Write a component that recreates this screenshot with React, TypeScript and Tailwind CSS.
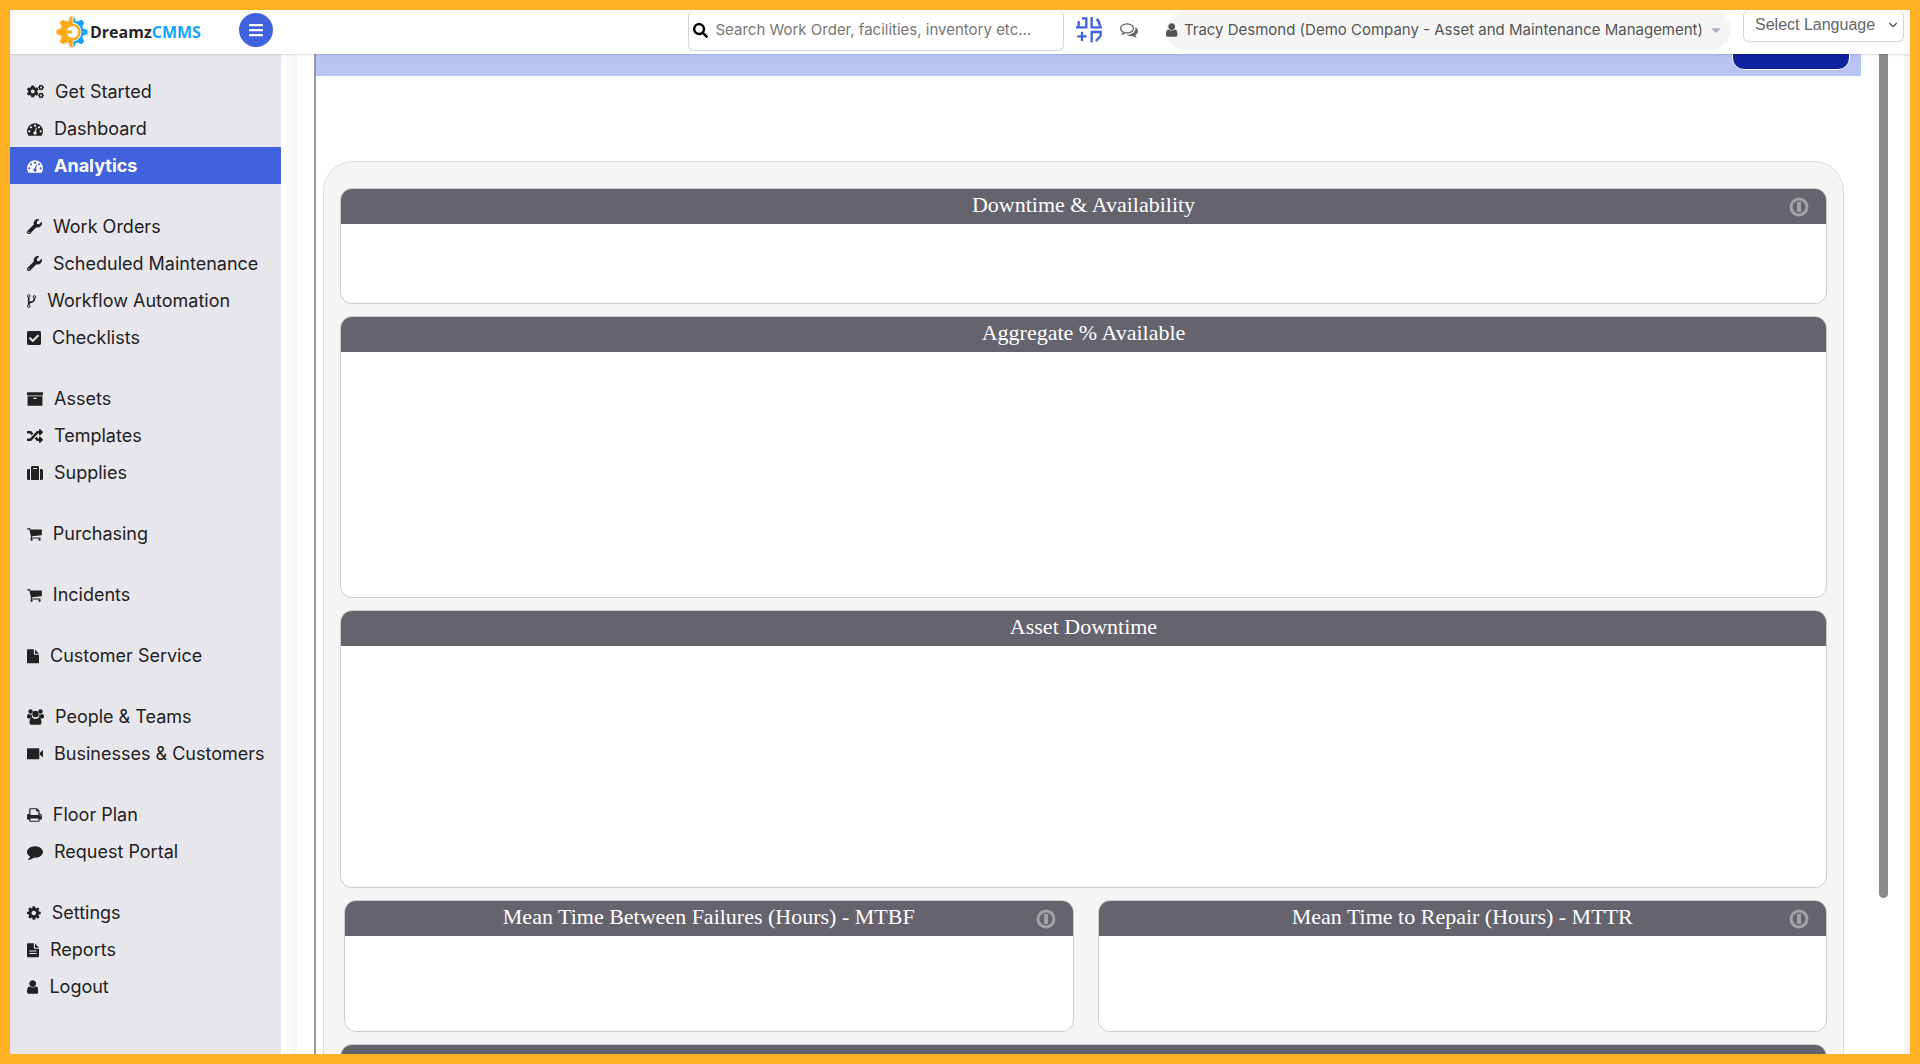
import type { ReactNode } from "react"
import {
  FaBars,
  FaCaretDown,
  FaCheckSquare,
  FaCogs,
  FaRandom,
  FaSearch,
  FaSuitcase,
  FaWrench,
} from "react-icons/fa"
import { FiChevronDown } from "react-icons/fi"

// Icons share a 1792 unit height, each one keeps its own width
function Glyph({ box, d }: { box: string; d: string }) {
  return (
    <svg viewBox={box} fill="currentColor" aria-hidden="true" className="h-4 w-auto shrink-0">
      <path d={d} />
    </svg>
  )
}

const GaugeIcon = () => (
  <Glyph
    box="0 0 1792 1792"
    d="M384 1152q0-53-37.5-90.5t-90.5-37.5-90.5 37.5-37.5 90.5 37.5 90.5 90.5 37.5 90.5-37.5 37.5-90.5zm192-448q0-53-37.5-90.5t-90.5-37.5-90.5 37.5-37.5 90.5 37.5 90.5 90.5 37.5 90.5-37.5 37.5-90.5zm428 481l101-382q6-26-7.5-48.5t-38.5-29.5-48 6.5-30 39.5l-101 382q-60 5-107 43.5t-63 98.5q-20 77 20 146t117 89 146-20 89-117q16-60-6-117t-72-91zm660-33q0-53-37.5-90.5t-90.5-37.5-90.5 37.5-37.5 90.5 37.5 90.5 90.5 37.5 90.5-37.5 37.5-90.5zm-640-640q0-53-37.5-90.5t-90.5-37.5-90.5 37.5-37.5 90.5 37.5 90.5 90.5 37.5 90.5-37.5 37.5-90.5zm448 192q0-53-37.5-90.5t-90.5-37.5-90.5 37.5-37.5 90.5 37.5 90.5 90.5 37.5 90.5-37.5 37.5-90.5zm320 448q0 261-141 483-19 29-54 29h-1402q-35 0-54-29-141-221-141-483 0-182 71-348t191-286 286-191 348-71 348 71 286 191 191 286 71 348z"
  />
)

const ForkIcon = () => (
  <Glyph
    box="384 0 1024 1792"
    d="M672 1472q0-40-28-68t-68-28-68 28-28 68 28 68 68 28 68-28 28-68zm0-1152q0-40-28-68t-68-28-68 28-28 68 28 68 68 28 68-28 28-68zm640 128q0-40-28-68t-68-28-68 28-28 68 28 68 68 28 68-28 28-68zm96 0q0 52-26 96.5t-70 69.5q-2 287-226 414-67 38-203 81-128 40-169.5 71t-41.5 100v26q44 25 70 69.5t26 96.5q0 80-56 136t-136 56-136-56-56-136q0-52 26-96.5t70-69.5v-820q-44-25-70-69.5t-26-96.5q0-80 56-136t136-56 136 56 56 136q0 52-26 96.5t-70 69.5v497q54-26 154-57 55-17 87.5-29.5t70.5-31 59-39.5 40.5-51 28-69.5 8.5-91.5q-44-25-70-69.5t-26-96.5q0-80 56-136t136-56 136 56 56 136z"
  />
)

const ArchiveIcon = () => (
  <Glyph
    box="0 0 1792 1792"
    d="M1088 832q0-26-19-45t-45-19h-256q-26 0-45 19t-19 45 19 45 45 19h256q26 0 45-19t19-45zm640-192v960q0 26-19 45t-45 19h-1536q-26 0-45-19t-19-45v-960q0-26 19-45t45-19h1536q26 0 45 19t19 45zm64-448v256q0 26-19 45t-45 19h-1664q-26 0-45-19t-19-45v-256q0-26 19-45t45-19h1664q26 0 45 19t19 45z"
  />
)

const CartIcon = () => (
  <Glyph
    box="64 0 1664 1792"
    d="M704 1536q0 52-38 90t-90 38-90-38-38-90 38-90 90-38 90 38 38 90zm896 0q0 52-38 90t-90 38-90-38-38-90 38-90 90-38 90 38 38 90zm128-1088v512q0 24-16.5 42.5t-40.5 21.5l-1044 122q13 60 13 70 0 16-24 64h920q26 0 45 19t19 45-19 45-45 19h-1024q-26 0-45-19t-19-45q0-11 8-31.5t16-36 21.5-40 15.5-29.5l-177-823h-204q-26 0-45-19t-19-45 19-45 45-19h256q16 0 28.5 6.5t19.5 15.5 13 24.5 8 26 5.5 29.5 4.5 26h1201q26 0 45 19t19 45z"
  />
)

const FileIcon = () => (
  <Glyph
    box="128 0 1344 1792"
    d="M1024 640v-480q18 10 30 22l386 420q12 14 18 38h-434zm-128 32q0 40 28 68t68 28h480v830q0 40-28 68t-68 28h-1152q-40 0-68-28t-28-68v-1374q0-40 28-68t68-28h672v544z"
  />
)

const ReportIcon = () => (
  <Glyph
    box="128 0 1344 1792"
    d="M1024 640v-480q18 10 30 22l386 420q12 14 18 38h-434zm-128 32q0 40 28 68t68 28h480v830q0 40-28 68t-68 28h-1152q-40 0-68-28t-28-68v-1374q0-40 28-68t68-28h672v544zM400 960v110h800v-110zm0 270v110h800v-110z"
  />
)

const PrintIcon = () => (
  <Glyph
    box="64 0 1664 1792"
    d="M448 1536h896v-256h-896v256zm0-640h896v-384h-160q-40 0-68-28t-28-68v-160h-640v640zm1152 64q0-26-19-45t-45-19-45 19-19 45 19 45 45 19 45-19 19-45zm128 0v416q0 13-9.5 22.5t-22.5 9.5h-224v160q0 40-28 68t-68 28h-960q-40 0-68-28t-28-68v-160h-224q-13 0-22.5-9.5t-9.5-22.5v-416q0-79 56.5-135.5t135.5-56.5h64v-544q0-40 28-68t68-28h672q40 0 88 20t76 48l152 152q28 28 48 76t20 88v256h64q79 0 135.5 56.5t56.5 135.5z"
  />
)

const CommentIcon = () => (
  <Glyph
    box="0 0 1792 1792"
    d="M1792 896q0 174-120 321.5t-326 233-450 85.5q-70 0-145-8-198 175-460 242-49 14-114 22-17 2-30.5-9t-17.5-29v-1q-3-4-.5-12t2-10 4.5-9.5l6-9 7-8.5 8-9q7-8 31-34.5t34.5-38 31-39.5 32.5-51 27-59 26-76q-157-89-247.5-220t-90.5-281q0-130 71-248.5t191-204.5 286-136.5 348-50.5q244 0 450 85.5t326 233 120 321.5z"
  />
)

const CogIcon = () => (
  <Glyph
    box="128 0 1536 1792"
    d="M1152 896q0-106-75-181t-181-75-181 75-75 181 75 181 181 75 181-75 75-181zm512-109v222q0 12-8 23t-20 13l-185 28q-19 54-39 91 35 50 107 138 10 12 10 25t-9 23q-27 37-99 108t-94 71q-12 0-26-9l-138-108q-44 23-91 38-16 136-29 186-7 28-36 28h-222q-14 0-24.5-8.5t-11.5-21.5l-28-184q-49-16-90-37l-141 107q-10 9-25 9-14 0-25-11-126-114-165-168-7-10-7-23 0-12 8-23 15-21 51-66.5t54-70.5q-27-50-41-99l-183-27q-13-2-21-12.5t-8-23.5v-222q0-12 8-23t19-13l186-28q14-46 39-92-40-57-107-138-10-12-10-24 0-10 9-23 26-36 98.5-107.5t94.5-71.5q13 0 26 10l138 107q44-23 91-38 16-136 29-186 7-28 36-28h222q14 0 24.5 8.5t11.5 21.5l28 184q49 16 90 37l142-107q9-9 24-9 13 0 25 10 129 119 165 170 7 8 7 22 0 12-8 23-15 21-51 66.5t-54 70.5q26 50 41 98l183 28q13 2 21 12.5t8 23.5z"
  />
)

const UserIcon = () => (
  <Glyph
    box="256 0 1280 1792"
    d="M1536 1399q0 109-62.5 187t-150.5 78h-854q-88 0-150.5-78t-62.5-187q0-85 8.5-160.5t31.5-152 58.5-131 94-89 134.5-34.5q131 128 313 128t313-128q76 0 134.5 34.5t94 89 58.5 131 31.5 152 8.5 160.5zm-256-887q0 159-112.5 271.5t-271.5 112.5-271.5-112.5-112.5-271.5 112.5-271.5 271.5-112.5 271.5 112.5 112.5 271.5z"
  />
)

const CameraIcon = () => (
  <Glyph box="0 0 1792 1792" d="M60 250h1260q60 0 60 60v1120q0 60-60 60h-1260q-60 0-60-60v-1120q0-60 60-60zM1792 450v840l-340-300v-240z" />
)

const TeamIcon = () => (
  <svg viewBox="0 0 17 16" fill="currentColor" aria-hidden="true" className="h-4 w-auto shrink-0">
    <circle cx="3.5" cy="2.5" r="2.2" />
    <circle cx="13.5" cy="2.5" r="2.2" />
    <circle cx="8.5" cy="5" r="3.2" />
    <path d="M0 7.6C0 5.8.6 4.9 1.6 4.9c1 .7 2 .7 3 .4C4.6 7 5 7.7 5.5 8.4 4.5 8.5 3.7 8.9 3.2 9.5H1.5C.6 9.5 0 8.8 0 7.6zM17 7.6c0-1.8-.6-2.7-1.6-2.7-1 .7-2 .7-3 .4 0 1.7-.4 2.4-.9 3.1 1 .1 1.8.5 2.3 1.1h1.7c.9 0 1.5-.7 1.5-1.9zM2.5 13.4c0-2.6.8-4.6 2.9-4.6 2 1.6 4.2 1.6 6.2 0 2.1 0 2.9 2 2.9 4.6 0 1.5-.9 2.4-2.2 2.4H4.7c-1.3 0-2.2-.9-2.2-2.4z" />
  </svg>
)

const ChatIcon = () => (
  <svg viewBox="0 128 1792 1664" fill="currentColor" aria-hidden="true" className="w-[18px]">
    <path d="M704 384q-153 0-286 52t-211.5 141-78.5 191q0 82 53 158t149 132l97 56-35 84q34-20 62-39l44-31 53 10q78 14 153 14 153 0 286-52t211.5-141 78.5-191-78.5-191-211.5-141-286-52zm0-128q191 0 353.5 68.5t256.5 186.5 94 257-94 257-256.5 186.5-353.5 68.5q-86 0-176-16-124 88-278 128-36 9-86 16h-3q-11 0-20.5-8t-11.5-21q-1-3-1-6.5t.5-6.5 2-6l2.5-5 3.5-5.5 4-5 4.5-5 4-4.5q5-6 23-25t26-29.5 22.5-29 25-38.5 20.5-44q-124-72-195-177t-71-224q0-139 94-257t256.5-186.5 353.5-68.5zm822 1169q10 24 20.5 44t25 38.5 22.5 29 26 29.5 23 25q1 1 4 4.5t4.5 5 4 5 3.5 5.5l2.5 5 2 6 .5 6.5-1 6.5q-3 14-13 22t-22 7q-50-7-86-16-154-40-278-128-90 16-176 16-271 0-472-132 58 4 88 4 161 0 309-45t264-129q125-92 192-212t67-254q0-77-23-152 129 71 204 178t75 230q0 120-71 224.5t-195 176.5z" />
  </svg>
)

const QuickAddIcon = () => (
  <svg viewBox="0 0 78 76" fill="none" stroke="#4063dd" strokeWidth="7" aria-hidden="true" className="w-[26px]">
    <path d="M0 31H31V4H18M8 31V12" />
    <path d="M78 31H47V0M62 6Q70 12 72 27" />
    <path d="M47 76V45H74V56L60 72" />
    <path d="M4 58H32M18 44V72" />
  </svg>
)

const InfoIcon = () => (
  <svg viewBox="0 0 20 20" fill="none" stroke="#a1a1a4" strokeWidth="3" aria-hidden="true" className="size-5">
    <circle cx="10" cy="10" r="8" />
    <path d="M10 5V15" strokeWidth="4" />
  </svg>
)

type NavItem = { label: string; icon: ReactNode; active?: boolean }

const navGroups: NavItem[][] = [
  [
    { label: "Get Started", icon: <FaCogs className="size-[17px]" /> },
    { label: "Dashboard", icon: <GaugeIcon /> },
    { label: "Analytics", icon: <GaugeIcon />, active: true },
  ],
  [
    { label: "Work Orders", icon: <FaWrench className="size-[15px]" /> },
    { label: "Scheduled Maintenance", icon: <FaWrench className="size-[15px]" /> },
    { label: "Workflow Automation", icon: <ForkIcon /> },
    { label: "Checklists", icon: <FaCheckSquare className="h-4 w-3.5" /> },
  ],
  [
    { label: "Assets", icon: <ArchiveIcon /> },
    { label: "Templates", icon: <FaRandom className="size-4" /> },
    { label: "Supplies", icon: <FaSuitcase className="size-4" /> },
  ],
  [{ label: "Purchasing", icon: <CartIcon /> }],
  [{ label: "Incidents", icon: <CartIcon /> }],
  [{ label: "Customer Service", icon: <FileIcon /> }],
  [
    { label: "People & Teams", icon: <TeamIcon /> },
    { label: "Businesses & Customers", icon: <CameraIcon /> },
  ],
  [
    { label: "Floor Plan", icon: <PrintIcon /> },
    { label: "Request Portal", icon: <CommentIcon /> },
  ],
  [
    { label: "Settings", icon: <CogIcon /> },
    { label: "Reports", icon: <ReportIcon /> },
    { label: "Logout", icon: <UserIcon /> },
  ],
]

const teeth = [0, 45, 90, 135, 180, 225, 270, 315]

function Logo() {
  return (
    <a href="#" className="flex items-center gap-[2px]">
      <svg viewBox="0 0 32 32" aria-hidden="true" className="size-8">
        <defs>
          <clipPath id="gear-left">
            <path d="M0 0H16.5V32H0z" />
          </clipPath>
          <clipPath id="gear-right">
            <path d="M17.5 0H32V32H17.5z" />
          </clipPath>
        </defs>
        <g clipPath="url(#gear-left)" fill="#fbab18">
          {teeth.map((angle) => (
            <path key={angle} d="M12 6L14 0.5H18L20 6z" transform={`rotate(${angle} 16 16)`} />
          ))}
          <circle cx="16" cy="16" r="8.5" fill="none" stroke="#fbab18" strokeWidth="6" />
        </g>
        <g clipPath="url(#gear-right)" fill="#14a3ff">
          {teeth.map((angle) => (
            <path key={angle} d="M12 6L14 0.5H18L20 6z" transform={`rotate(${angle} 16 16)`} />
          ))}
          <circle cx="16" cy="16" r="10.5" fill="none" stroke="#14a3ff" strokeWidth="2" />
        </g>
        <path d="M16 8.5a7.5 7.5 0 0 1 0 15" fill="none" stroke="#fbab18" strokeWidth="2.5" />
        <path d="M9 14.5H16V17.5H9z" fill="#fbab18" />
      </svg>
      <span className="font-['Open_Sans',sans-serif] text-base font-bold text-[#2a2528]">
        Dreamz<span className="text-[#14a3ff]">CMMS</span>
      </span>
    </a>
  )
}

function Header() {
  return (
    <header className="relative z-10 flex h-11 shrink-0 items-start bg-white shadow-sm">
      <div className="pt-[6px] pl-[46px]">
        <Logo />
      </div>
      <button
        aria-label="Toggle menu"
        className="mt-[3px] ml-[38px] flex size-[34px] items-center justify-center rounded-full bg-[#4063dd] text-white"
      >
        <FaBars className="size-4" />
      </button>
      <label className="ml-auto flex h-[41px] w-[376px] items-center gap-[7px] rounded-md border border-t-0 border-gray-300 pl-1">
        <FaSearch className="size-[15px] text-black" />
        <input
          type="text"
          aria-label="Search"
          placeholder="Search Work Order, facilities, inventory etc..."
          className="flex-1 text-[15px] outline-none placeholder:text-[#777]"
        />
      </label>
      <div className="flex h-10 items-center gap-[18px] pl-3 text-[#666]">
        <button aria-label="Quick add">
          <QuickAddIcon />
        </button>
        <button aria-label="Messages">
          <ChatIcon />
        </button>
      </div>
      <button className="ml-7 flex h-10 items-center gap-[6px] rounded-full bg-[#f5f5f5] pr-2 text-[15px] text-[#555]">
        <UserIcon />
        Tracy Desmond (Demo Company - Asset and Maintenance Management)
        <FaCaretDown className="size-3.5 text-[#a9aec4]" />
      </button>
      <div className="relative mr-[6px] ml-3">
        <select
          aria-label="Select Language"
          className="h-8 w-[161px] appearance-none rounded-md border border-t-0 border-gray-300 bg-white pb-px pl-[11px] font-['Liberation_Sans',sans-serif] text-base text-[#666]"
        >
          <option>Select Language</option>
        </select>
        <FiChevronDown className="pointer-events-none absolute top-2 right-1 size-3.5 text-[#555]" />
      </div>
    </header>
  )
}

function Sidebar() {
  return (
    <nav className="flex w-[271px] shrink-0 flex-col gap-6 bg-[#e7e6eb] pt-[19px]">
      {navGroups.map((group) => (
        <ul key={group[0].label}>
          {group.map((item) => (
            <li key={item.label}>
              <a
                href="#"
                className={
                  item.active
                    ? "flex h-[37px] items-center gap-[11px] bg-[#4063dd] pl-[17px] text-lg font-bold text-white"
                    : "flex h-[37px] items-center gap-[11px] pl-[17px] text-lg text-[#222]"
                }
              >
                {item.icon}
                {item.label}
              </a>
            </li>
          ))}
        </ul>
      ))}
    </nav>
  )
}

function Card({ title, body, info }: { title?: string; body: string; info?: boolean }) {
  return (
    <section className="flex-1 overflow-hidden rounded-xl border border-[#ccc] bg-white">
      <div className="grid h-[35px] grid-cols-[1fr_auto_1fr] items-center bg-[#65646d] px-[17px]">
        <h2 className="col-start-2 pb-[3px] font-['Liberation_Serif',serif] text-[22px] leading-8 text-white">{title}</h2>
        {info && (
          <button aria-label={`About ${title}`} className="justify-self-end">
            <InfoIcon />
          </button>
        )}
      </div>
      <div className={body} />
    </section>
  )
}

export default function App() {
  return (
    <div className="flex h-screen flex-col overflow-hidden border-10 border-[#ffb023] bg-white font-['Inter',sans-serif]">
      <Header />
      <div className="flex min-h-0 flex-1">
        <Sidebar />
        <div className="w-4 shrink-0 bg-linear-to-r from-white to-[#f7f7f7]" />
        <main className="ml-[17px] flex flex-1 overflow-hidden border-l-2 border-[#999]">
          <div className="flex-1">
            <div className="flex h-[22px] items-end justify-end bg-[#b8c4f4] pr-[11px] pb-[6px]">
              <button aria-label="Back" className="h-10 w-[118px] shrink-0 rounded-xl border border-white bg-[#11239c]" />
            </div>
            <div className="mt-[85px] mr-[17px] ml-[7px] flex flex-col gap-3 rounded-t-[30px] border border-[#ddd] bg-[#f5f5f5] px-4 pt-[26px]">
              <Card title="Downtime & Availability" body="h-[79px]" info />
              <Card title="Aggregate % Available" body="h-[245px]" />
              <Card title="Asset Downtime" body="h-[241px]" />
              <div className="flex gap-6 pl-1">
                <Card title="Mean Time Between Failures (Hours) - MTBF" body="h-[95px]" info />
                <Card title="Mean Time to Repair (Hours) - MTTR" body="h-[95px]" info />
              </div>
              <Card body="h-[79px]" />
            </div>
          </div>
          <div className="ml-[18px] h-[844px] w-[9px] rounded-b-full bg-[#8a8a8a]" />
          <div className="ml-4 w-[6px] bg-[#f5f5f5]" />
        </main>
      </div>
    </div>
  )
}
